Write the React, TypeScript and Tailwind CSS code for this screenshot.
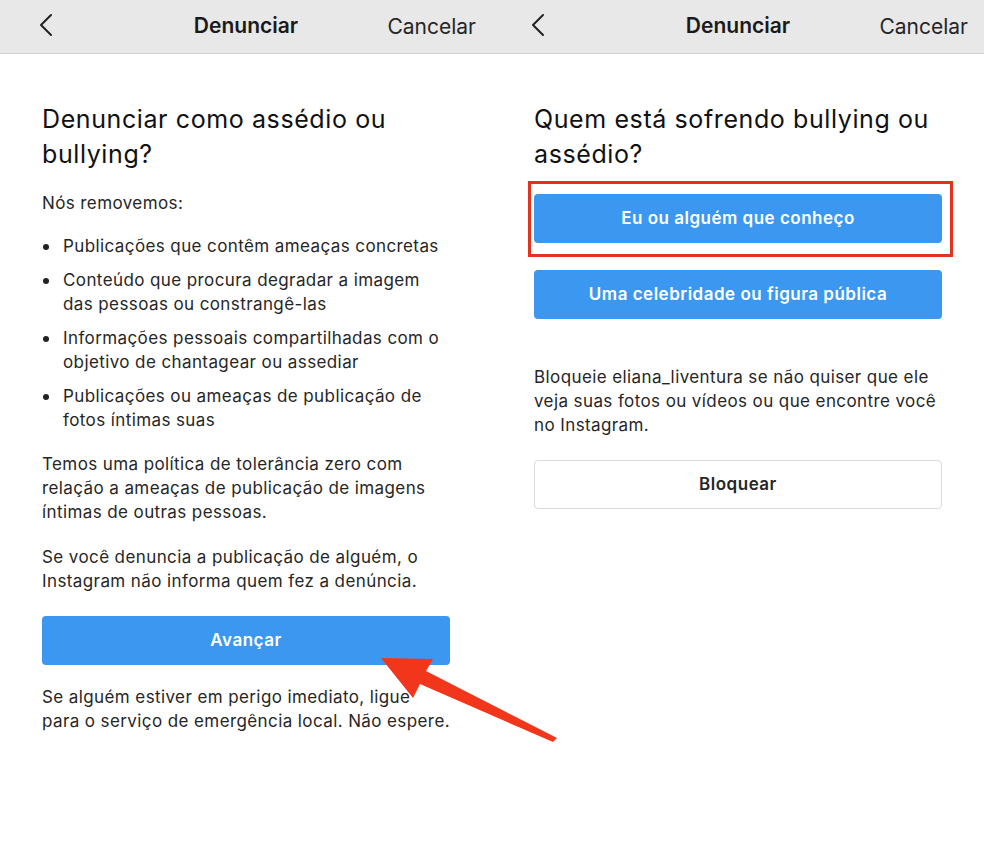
import React from "react";

const Chevron = () => (
  <svg width="14" height="24" viewBox="0 0 14 24" fill="none">
    <polyline
      points="12,2 2,12 12,22"
      stroke="#222"
      strokeWidth="2"
      strokeLinecap="round"
      strokeLinejoin="round"
    />
  </svg>
);

const Header = () => (
  <div className="h-[54px] bg-[#e8e8e8] border-b border-[#cfcfcf] flex items-center relative">
    <div className="absolute left-[39px] top-[13px]">
      <Chevron />
    </div>
    <div className="w-full text-center text-[21px] font-semibold text-[#1a1a1a] -mt-[2px]">
      Denunciar
    </div>
    <div className="absolute right-[16px] top-[11px] text-[21px] text-[#262626]">
      Cancelar
    </div>
  </div>
);

const bullets = [
  ["Publicações que contêm ameaças concretas"],
  ["Conteúdo que procura degradar a imagem", "das pessoas ou constrangê-las"],
  ["Informações pessoais compartilhadas com o", "objetivo de chantagear ou assediar"],
  ["Publicações ou ameaças de publicação de", "fotos íntimas suas"],
];

const body = "text-[17px] leading-[24px] tracking-[0.4px]";
const blueBtn =
  "w-[408px] h-[49px] rounded-[4px] bg-[#3b97ef] text-white font-semibold text-[17px] tracking-[0.5px]";

const LeftScreen = () => (
  <div className="w-[492px] shrink-0">
    <Header />
    <div className="pl-[42px] pr-[20px] text-[#262626]">
      <h1 className="mt-[48px] text-[25px] leading-[35px] tracking-[0.6px] text-[#111]">
        Denunciar como assédio ou
        <br />
        bullying?
      </h1>
      <p className={`mt-[19px] ${body}`}>Nós removemos:</p>
      <ul className="mt-[19px] flex flex-col gap-[10px]">
        {bullets.map((lines, i) => (
          <li key={i} className={`flex ${body}`}>
            <span className="w-[21px] shrink-0 flex items-start pt-[10px]">
              <span className="w-[6px] h-[6px] rounded-full bg-[#222] ml-[1px]" />
            </span>
            <span>
              {lines.map((l, j) => (
                <React.Fragment key={j}>
                  {j > 0 && <br />}
                  {l}
                </React.Fragment>
              ))}
            </span>
          </li>
        ))}
      </ul>
      <p className={`mt-[20px] ${body}`}>
        Temos uma política de tolerância zero com
        <br />
        relação a ameaças de publicação de imagens
        <br />
        íntimas de outras pessoas.
      </p>
      <p className={`mt-[21px] ${body}`}>
        Se você denuncia a publicação de alguém, o
        <br />
        Instagram não informa quem fez a denúncia.
      </p>
      <button className={`mt-[23px] ${blueBtn}`}>Avançar</button>
      <p className={`mt-[20px] ${body} leading-[23px]`}>
        Se alguém estiver em perigo imediato, ligue
        <br />
        para o serviço de emergência local. Não espere.
      </p>
    </div>
  </div>
);

const RightScreen = () => (
  <div className="w-[492px] shrink-0">
    <Header />
    <div className="pl-[42px] pr-[20px] text-[#262626]">
      <h1 className="mt-[48px] text-[25px] leading-[35px] tracking-[0.6px] text-[#111]">
        Quem está sofrendo bullying ou
        <br />
        assédio?
      </h1>
      <div className="mt-[9px] -ml-[6px] w-[425px] border-[3px] border-[#e3331d] px-[3px] pt-[10px] pb-[11px]">
        <button className={blueBtn}>Eu ou alguém que conheço</button>
      </div>
      <button className={`mt-[13px] ${blueBtn}`}>
        Uma celebridade ou figura pública
      </button>
      <p className={`mt-[46px] ${body}`}>
        Bloqueie eliana_liventura se não quiser que ele
        <br />
        veja suas fotos ou vídeos ou que encontre você
        <br />
        no Instagram.
      </p>
      <button className="mt-[23px] w-[408px] h-[49px] rounded-[4px] bg-white border border-[#dbdbdb] text-[#262626] font-semibold text-[17px] tracking-[0.5px]">
        Bloquear
      </button>
    </div>
  </div>
);

export default function App() {
  return (
    <div
      className="relative w-[984px] h-[845px] bg-white overflow-hidden flex"
      style={{ fontFamily: "Inter, 'Liberation Sans', sans-serif" }}
    >
      <LeftScreen />
      <RightScreen />
      {/* red arrow pointing at Avançar */}
      <svg
        className="absolute left-0 top-0 pointer-events-none"
        width="984"
        height="845"
        viewBox="0 0 984 845"
      >
        <polygon
          points="381,658 433,659 426,671 557,738 553,742 420,684 413,698"
          fill="#f2361c"
        />
      </svg>
    </div>
  );
}
